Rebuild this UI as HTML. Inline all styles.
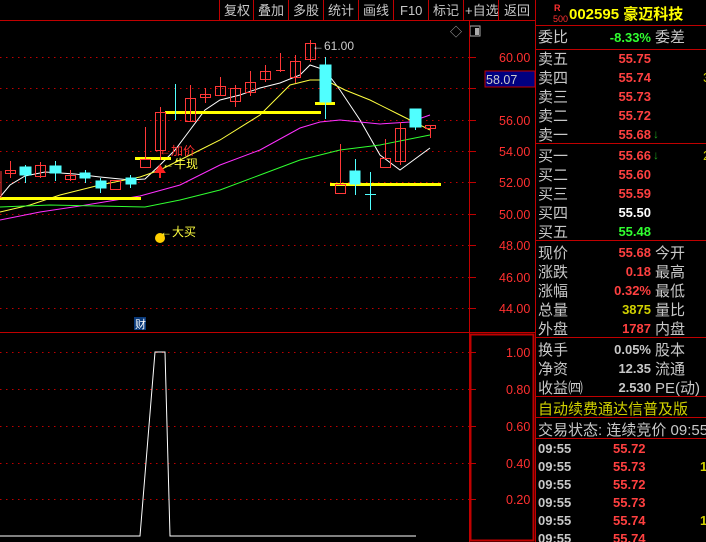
<!DOCTYPE html><html><head><meta charset="utf-8"><style>
html,body{margin:0;padding:0;background:#000;width:706px;height:542px;overflow:hidden}
svg{display:block}
text{font-family:"Liberation Sans","Noto Sans CJK SC",sans-serif}
</style></head><body>
<svg width="706" height="542" viewBox="0 0 706 542" xmlns="http://www.w3.org/2000/svg">
<rect width="706" height="542" fill="#000"/>
<!-- toolbar -->
<g stroke="#c00000" stroke-width="1">
<line x1="0" y1="20.5" x2="535" y2="20.5"/>
<line x1="219.5" y1="0" x2="219.5" y2="20"/><line x1="253.5" y1="0" x2="253.5" y2="20"/><line x1="288.5" y1="0" x2="288.5" y2="20"/><line x1="323.5" y1="0" x2="323.5" y2="20"/><line x1="358.5" y1="0" x2="358.5" y2="20"/><line x1="393.5" y1="0" x2="393.5" y2="20"/><line x1="428.5" y1="0" x2="428.5" y2="20"/><line x1="463.5" y1="0" x2="463.5" y2="20"/><line x1="498.5" y1="0" x2="498.5" y2="20"/>
</g>
<g fill="#c8c8c8" font-size="13">
<text x="224" y="15">复权</text><text x="258" y="15">叠加</text><text x="293" y="15">多股</text><text x="328" y="15">统计</text><text x="363" y="15">画线</text><text x="400" y="15">F10</text><text x="433" y="15">标记</text><text x="465" y="15">+自选</text><text x="504" y="15">返回</text>
</g>
<text x="450" y="36" fill="#aaa" font-size="12">◇</text>
<rect x="470" y="26" width="10" height="10" fill="none" stroke="#aaa"/><rect x="475" y="28" width="4" height="7" fill="#aaa"/>
<!-- grids -->
<g stroke="#c00000" stroke-dasharray="1.5,4.5">
<line x1="0" y1="57.5" x2="469" y2="57.5"/><line x1="0" y1="88.5" x2="469" y2="88.5"/><line x1="0" y1="120.5" x2="469" y2="120.5"/><line x1="0" y1="151.5" x2="469" y2="151.5"/><line x1="0" y1="182.5" x2="469" y2="182.5"/><line x1="0" y1="214.5" x2="469" y2="214.5"/><line x1="0" y1="245.5" x2="469" y2="245.5"/><line x1="0" y1="277.5" x2="469" y2="277.5"/><line x1="0" y1="308.5" x2="469" y2="308.5"/>
<line x1="0" y1="352.5" x2="469" y2="352.5"/><line x1="0" y1="389.5" x2="469" y2="389.5"/><line x1="0" y1="426.5" x2="469" y2="426.5"/><line x1="0" y1="463.5" x2="469" y2="463.5"/><line x1="0" y1="499.5" x2="469" y2="499.5"/>
</g>
<g stroke="#c00000">
<line x1="469.5" y1="20" x2="469.5" y2="542"/>
<line x1="0" y1="332.5" x2="535" y2="332.5"/>
<rect x="470.5" y="334.5" width="63" height="206" fill="none" stroke-width="2"/>
<line x1="535.5" y1="0" x2="535.5" y2="542"/>
</g>
<g stroke="#c00000">
<line x1="470" y1="57.5" x2="476" y2="57.5"/><line x1="470" y1="88.5" x2="476" y2="88.5"/><line x1="470" y1="120.5" x2="476" y2="120.5"/><line x1="470" y1="151.5" x2="476" y2="151.5"/><line x1="470" y1="182.5" x2="476" y2="182.5"/><line x1="470" y1="214.5" x2="476" y2="214.5"/><line x1="470" y1="245.5" x2="476" y2="245.5"/><line x1="470" y1="277.5" x2="476" y2="277.5"/><line x1="470" y1="308.5" x2="476" y2="308.5"/>
<line x1="470" y1="352.5" x2="476" y2="352.5"/><line x1="470" y1="389.5" x2="476" y2="389.5"/><line x1="470" y1="426.5" x2="476" y2="426.5"/><line x1="470" y1="463.5" x2="476" y2="463.5"/><line x1="470" y1="499.5" x2="476" y2="499.5"/>
</g>
<g fill="#ff3030" font-size="12.5">
<text x="499" y="62">60.00</text><text x="499" y="125">56.00</text><text x="499" y="156">54.00</text><text x="499" y="187">52.00</text><text x="499" y="219">50.00</text><text x="499" y="250">48.00</text><text x="499" y="282">46.00</text><text x="499" y="313">44.00</text>
<text x="506" y="357">1.00</text><text x="506" y="394">0.80</text><text x="506" y="431">0.60</text><text x="506" y="468">0.40</text><text x="506" y="504">0.20</text>
</g>
<rect x="485" y="71" width="50" height="16" fill="#000080" stroke="#c00000"/>
<text x="486" y="84" fill="#ccc" font-size="12.5">58.07</text>
<!-- MA lines -->
<polyline fill="none" stroke="#fff" points="0,197 10,185 25,176 45,172 75,174 100,177 130,180 145,179 160,165 175,150 190,130 205,110 220,100 240,95 260,88 280,83 300,75 310,65 325,70 340,90 360,120 380,155 400,170 430,148"/>
<polyline fill="none" stroke="#ffff40" points="0,212 30,205 60,195 100,185 140,177 160,170 190,155 220,140 260,115 290,85 310,80 325,80 345,90 370,100 400,115 430,130"/>
<polyline fill="none" stroke="#ff30ff" points="0,220 40,212 80,206 140,196 180,185 220,165 260,150 300,128 320,122 340,120 380,124 410,122 430,115"/>
<polyline fill="none" stroke="#30ff30" points="0,207 50,205 145,207 180,200 220,190 260,175 300,160 340,150 380,145 430,135"/>
<!-- yellow bars -->
<g fill="#ffff00">
<rect x="0" y="197" width="141" height="3"/><rect x="135" y="157" width="36" height="3"/><rect x="165" y="111" width="156" height="3"/><rect x="315" y="102" width="20" height="3"/><rect x="330" y="183" width="111" height="3"/>
</g>
<!-- candles: red hollow -->
<g stroke="#ff3838" fill="none">
<line x1="1" y1="171" x2="1" y2="198"/>
<line x1="10.5" y1="161" x2="10.5" y2="178"/><rect x="5.5" y="170.5" width="10" height="3"/>
<line x1="40.5" y1="162" x2="40.5" y2="178"/><rect x="35.5" y="165.5" width="10" height="11"/>
<line x1="70.5" y1="170" x2="70.5" y2="181"/><rect x="65.5" y="175.5" width="10" height="4"/>
<rect x="110.5" y="180.5" width="10" height="9"/>
<line x1="145.5" y1="127" x2="145.5" y2="159"/><rect x="140.5" y="159.5" width="10" height="8"/>
<line x1="160.5" y1="107" x2="160.5" y2="160"/><rect x="155.5" y="112.5" width="10" height="38"/>
<line x1="190.5" y1="85" x2="190.5" y2="122"/><rect x="185.5" y="98.5" width="10" height="23"/>
<line x1="205.5" y1="88" x2="205.5" y2="103"/><rect x="200.5" y="94.5" width="10" height="3"/>
<line x1="220.5" y1="77" x2="220.5" y2="95"/><rect x="215.5" y="86.5" width="10" height="9"/>
<line x1="235.5" y1="85" x2="235.5" y2="107"/><rect x="230.5" y="88.5" width="10" height="13"/>
<line x1="250.5" y1="71" x2="250.5" y2="96"/><rect x="245.5" y="82.5" width="10" height="10"/>
<line x1="265.5" y1="65" x2="265.5" y2="82"/><rect x="260.5" y="71.5" width="10" height="8"/>
<line x1="280.5" y1="53" x2="280.5" y2="72"/><line x1="276" y1="70.5" x2="285" y2="70.5"/>
<line x1="295.5" y1="55" x2="295.5" y2="83"/><rect x="290.5" y="61.5" width="10" height="16"/>
<line x1="310.5" y1="40" x2="310.5" y2="62"/><rect x="305.5" y="43.5" width="10" height="16"/>
<line x1="340.5" y1="144" x2="340.5" y2="184"/><rect x="335.5" y="184.5" width="10" height="9"/>
<line x1="385.5" y1="139" x2="385.5" y2="158"/><rect x="380.5" y="158.5" width="10" height="9"/>
<line x1="400.5" y1="122" x2="400.5" y2="165"/><rect x="395.5" y="128.5" width="10" height="33"/>
<line x1="430.5" y1="125" x2="430.5" y2="138"/><rect x="425.5" y="125.5" width="10" height="3"/>
</g>
<!-- cyan candles -->
<g stroke="#50ffff" fill="#50ffff">
<line x1="25.5" y1="165" x2="25.5" y2="183"/><rect x="20" y="167" width="11" height="8"/>
<line x1="55.5" y1="161" x2="55.5" y2="181"/><rect x="50" y="166" width="11" height="7"/>
<line x1="85.5" y1="170" x2="85.5" y2="183"/><rect x="80" y="173" width="10" height="5"/>
<line x1="100.5" y1="178" x2="100.5" y2="193"/><rect x="96" y="181" width="10" height="7"/>
<line x1="130.5" y1="175" x2="130.5" y2="188"/><rect x="126" y="178" width="10" height="6"/>
<line x1="175.5" y1="84" x2="175.5" y2="120"/>
<line x1="325.5" y1="57" x2="325.5" y2="119"/><rect x="320" y="65" width="11" height="37"/>
<line x1="355.5" y1="159" x2="355.5" y2="195"/><rect x="350" y="171" width="10" height="13"/>
<line x1="370.5" y1="172" x2="370.5" y2="210"/><line x1="365" y1="194.5" x2="376" y2="194.5"/>
<rect x="410" y="109" width="11" height="18"/><line x1="415.5" y1="109" x2="415.5" y2="130"/>
</g>
<!-- annotations -->
<text x="312" y="50" fill="#ccc" font-size="12">←61.00</text>
<text x="159" y="155" fill="#ff3030" font-size="12">←加价</text>
<text x="162" y="168" fill="#ffff40" font-size="12">←牛现</text>
<path d="M160,178 L160,171 M156,172 L160,166 L164,172 Z" stroke="#ff2020" fill="#ff2020" stroke-width="2"/>
<circle cx="160" cy="238" r="5" fill="#ffd000"/>
<text x="160" y="236" fill="#ffff40" font-size="12">←大买</text>
<rect x="134" y="317" width="12" height="13" fill="#0a3a7a"/>
<text x="135" y="328" fill="#fff" font-size="11">财</text>
<!-- lower line -->
<polyline fill="none" stroke="#fff" points="0,536 140,536 155,352 160,352 165,352 170,536 416,536"/>
<!-- right panel -->
<g stroke="#c00000">
<line x1="535" y1="25.5" x2="706" y2="25.5"/><line x1="535" y1="49.5" x2="706" y2="49.5"/><line x1="535" y1="143.5" x2="706" y2="143.5"/><line x1="535" y1="240.5" x2="706" y2="240.5"/><line x1="535" y1="337.5" x2="706" y2="337.5"/><line x1="535" y1="396.5" x2="706" y2="396.5"/><line x1="535" y1="417.5" x2="706" y2="417.5"/><line x1="535" y1="438.5" x2="706" y2="438.5"/>
</g>
<text x="554" y="11" fill="#ff3030" font-size="9" font-weight="bold">R</text>
<text x="553" y="22" fill="#ff3030" font-size="9">500</text>
<text x="569" y="19" fill="#ffff00" font-size="15" font-weight="bold">002595 豪迈科技</text>
<g fill="#c8c8c8" font-size="15">
<text x="538" y="42">委比</text><text x="655" y="42">委差</text>
<text x="538" y="64">卖五</text><text x="538" y="83">卖四</text><text x="538" y="102">卖三</text><text x="538" y="121">卖二</text><text x="538" y="140">卖一</text>
<text x="538" y="161">买一</text><text x="538" y="180">买二</text><text x="538" y="199">买三</text><text x="538" y="218">买四</text><text x="538" y="237">买五</text>
<text x="538" y="258">现价</text><text x="655" y="258">今开</text>
<text x="538" y="277">涨跌</text><text x="655" y="277">最高</text>
<text x="538" y="296">涨幅</text><text x="655" y="296">最低</text>
<text x="538" y="315">总量</text><text x="655" y="315">量比</text>
<text x="538" y="334">外盘</text><text x="655" y="334">内盘</text>
<text x="538" y="355">换手</text><text x="655" y="355">股本</text>
<text x="538" y="374">净资</text><text x="655" y="374">流通</text>
<text x="538" y="393">收益㈣</text><text x="655" y="393">PE(动)</text>
<text x="538" y="435">交易状态: 连续竞价 09:55</text>
</g>
<text x="538" y="414" fill="#d0d000" font-size="15">自动续费通达信普及版</text>
<g font-size="13" font-weight="bold" text-anchor="end">
<text x="651" y="42" fill="#30ff30">-8.33%</text>
<text x="651" y="63" fill="#ff4040">55.75</text><text x="651" y="82" fill="#ff4040">55.74</text><text x="651" y="101" fill="#ff4040">55.73</text><text x="651" y="120" fill="#ff4040">55.72</text><text x="651" y="139" fill="#ff4040">55.68</text>
<text x="651" y="160" fill="#ff4040">55.66</text><text x="651" y="179" fill="#ff4040">55.60</text><text x="651" y="198" fill="#ff4040">55.59</text><text x="651" y="217" fill="#fff">55.50</text><text x="651" y="236" fill="#30ff30">55.48</text>
<text x="651" y="257" fill="#ff4040">55.68</text><text x="651" y="276" fill="#ff4040">0.18</text><text x="651" y="295" fill="#ff4040">0.32%</text><text x="651" y="314" fill="#d0d000">3875</text><text x="651" y="333" fill="#ff4040">1787</text>
<text x="651" y="354" fill="#c8c8c8">0.05%</text><text x="651" y="373" fill="#c8c8c8">12.35</text><text x="651" y="392" fill="#c8c8c8">2.530</text>
</g>
<text x="703" y="82" fill="#d0d000" font-size="13">3</text>
<text x="703" y="160" fill="#d0d000" font-size="13">2</text>
<g fill="#20a020" font-size="12"><text x="653" y="138">↓</text><text x="653" y="159">↓</text></g>
<g font-size="13" font-weight="bold">
<text x="538" y="453" fill="#c8c8c8">09:55</text><text x="613" y="453" fill="#ff4040">55.72</text>
<text x="538" y="471" fill="#c8c8c8">09:55</text><text x="613" y="471" fill="#ff4040">55.73</text><text x="700" y="471" fill="#d0d000">1</text>
<text x="538" y="489" fill="#c8c8c8">09:55</text><text x="613" y="489" fill="#ff4040">55.72</text>
<text x="538" y="507" fill="#c8c8c8">09:55</text><text x="613" y="507" fill="#ff4040">55.73</text>
<text x="538" y="525" fill="#c8c8c8">09:55</text><text x="613" y="525" fill="#ff4040">55.74</text><text x="700" y="525" fill="#d0d000">1</text>
<text x="538" y="543" fill="#c8c8c8">09:55</text><text x="613" y="543" fill="#ff4040">55.74</text>
</g>
</svg>
</body></html>
